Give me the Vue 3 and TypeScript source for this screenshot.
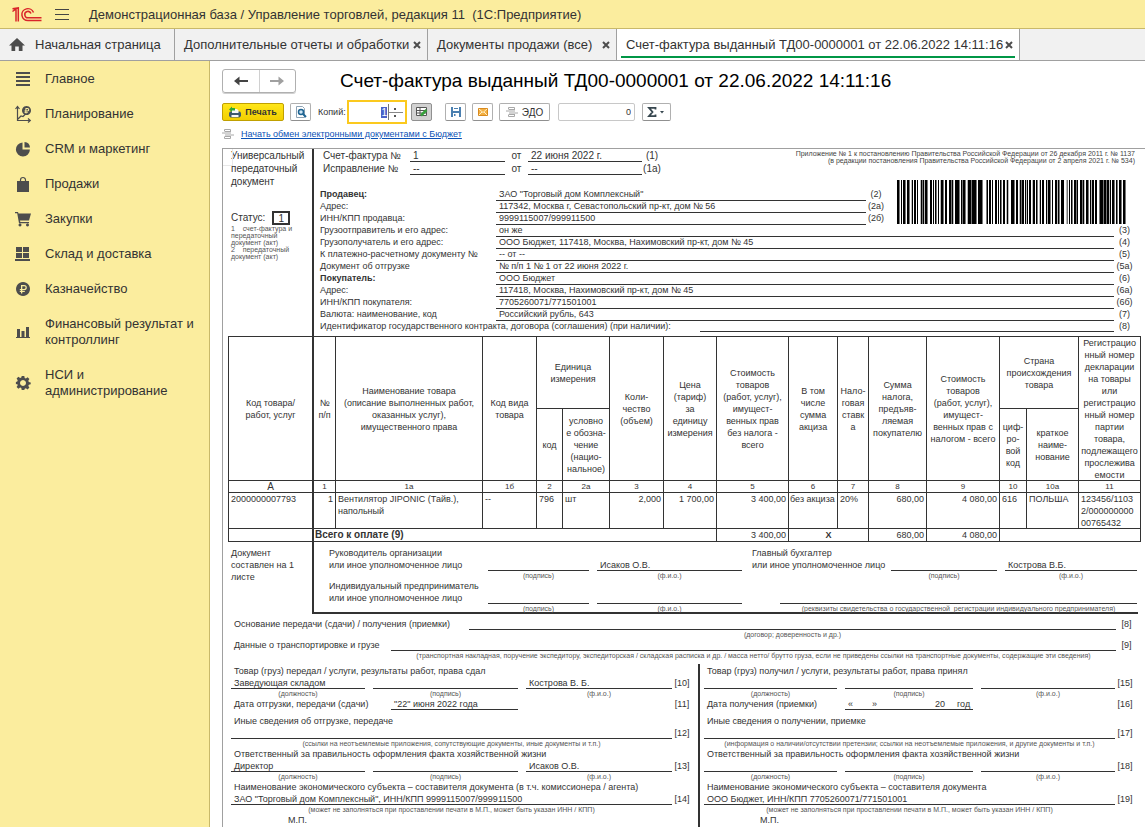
<script setup lang="ts">
import { onMounted, ref } from 'vue'

interface Shape { d: string; line?: boolean }
interface MenuItem { label: string; shapes: Shape[] }
interface Tab { label: string; cls: string; active?: boolean }
interface Party { label: string; value: string; code: string; bold?: boolean }
interface Half {
  cls: string
  title: string
  position: string
  person: string
  codes: string[]
  dateLabel: string
  date: string[]
  otherLabel: string
  otherNote: string
  chief: string
  chiefName: string
  subjectLabel: string
  subject: string
}

const menu: MenuItem[] = [
  { label: 'Главное', shapes: [{ d: 'M1 1h14v2H1zM1 5h14v2H1zM1 9h14v2H1zM1 13h14v2H1z' }] },
  {
    label: 'Планирование',
    shapes: [
      { d: 'M2.500 1v13.500H15M0.500 3l2-2.500 2 2.500M13 12.500l2.300 2-2.300 2M3 13l3-3 2 .5 3-3', line: true },
      { d: 'M11.500 0a4.500 4.500 0 1 0 .01 0zM10.500 2h2a1.600 1.600 0 0 1 0 3.500h-1.200v.7h1.500v.8h-1.500v1h-1v-1h-.8v-.8h.8v-.7h-.8v-.9h.8zM11.400 3v1.500h1a.7.7 0 0 0 0-1.500z' }
    ]
  },
  { label: 'CRM и маркетинг', shapes: [{ d: 'M7.500 1.500V8.500h7.400A7 7 0 1 1 7.500 1.500zM9.500 1a6 6 0 0 1 5.500 5.500H9.500z' }] },
  { label: 'Продажи', shapes: [{ d: 'M2 5h12v11H2z' }, { d: 'M5.500 7.500V4a2.500 2.500 0 0 1 5 0v3.500', line: true }] },
  {
    label: 'Закупки',
    shapes: [
      { d: 'M0 1h3l.5 1.500H16L14 9.500H5l.3 1.500H14v1.300H4L2.200 2.300H0zM5 12.500a1.500 1.500 0 1 0 .01 0zM12.500 12.500a1.500 1.500 0 1 0 .01 0z' }
    ]
  },
  { label: 'Склад и доставка', shapes: [{ d: 'M1 1h6v5H1zM8 1h6v5H8zM1 7h6v5H1zM8 7h6v5H8zM0 13h15v2H0z' }] },
  {
    label: 'Казначейство',
    shapes: [
      { d: 'M8 1a7 7 0 1 0 .01 0zM6 4h3.200a2.600 2.600 0 0 1 0 5.200H7.300v.7h2.500v1.100H7.300v1.500H6V11H4.800V9.900H6v-.7H4.800V8H6zM7.300 5.200V8h1.900a1.400 1.400 0 0 0 0-2.800z' }
    ]
  },
  { label: 'Финансовый результат и контроллинг', shapes: [{ d: 'M2 5h3v8H2zM6.500 7h3v6h-3zM11 3h3v10h-3zM1 13h14v1H1z' }] },
  {
    label: 'НСИ и администрирование',
    shapes: [
      { d: 'M6.700 1h2.600l.4 1.900 1.200.5 1.700-1.100 1.800 1.800-1.100 1.700.5 1.200 1.900.4v1.900l-1.900.4-.5 1.200 1.100 1.700-1.800 1.800-1.700-1.100-1.200.5L9.300 15H6.700l-.4-1.900-1.200-.5-1.700 1.100-1.800-1.800 1.100-1.700-.5-1.200L.9 9.300V7l1.400-.5.4-1.200-1.100-1.700 1.800-1.800 1.700 1.100 1.200-.5zM8 5a3 3 0 1 0 .01 0z' }
    ]
  }
]

const tabs: Tab[] = [
  { label: 'Дополнительные отчеты и обработки', cls: 'tab-reports' },
  { label: 'Документы продажи (все)', cls: 'tab-sales' },
  { label: 'Счет-фактура выданный ТД00-0000001 от 22.06.2022 14:11:16', cls: 'tab-invoice', active: true }
]

const seller: Party[] = [
  { label: 'Продавец:', value: 'ЗАО "Торговый дом Комплексный"', code: '(2)', bold: true },
  { label: 'Адрес:', value: '117342, Москва г, Севастопольский пр-кт, дом № 56', code: '(2а)' },
  { label: 'ИНН/КПП продавца:', value: '9999115007/999911500', code: '(2б)' }
]

const parties: Party[] = [
  { label: 'Грузоотправитель и его адрес:', value: 'он же', code: '(3)' },
  { label: 'Грузополучатель и его адрес:', value: 'ООО Бюджет, 117418, Москва, Нахимовский пр-кт, дом № 45', code: '(4)' },
  { label: 'К платежно-расчетному документу №', value: '-- от --', code: '(5)' },
  { label: 'Документ об отгрузке', value: '№ п/п 1 № 1 от 22 июня 2022 г.', code: '(5а)' },
  { label: 'Покупатель:', value: 'ООО Бюджет', code: '(6)', bold: true },
  { label: 'Адрес:', value: '117418, Москва, Нахимовский пр-кт, дом № 45', code: '(6а)' },
  { label: 'ИНН/КПП покупателя:', value: '7705260071/771501001', code: '(6б)' },
  { label: 'Валюта: наименование, код', value: 'Российский рубль, 643', code: '(7)' }
]

const columnWidths: number[] = [85, 22, 147, 54, 26, 47, 54, 53, 72, 49, 31, 58, 73, 27, 52, 62]
const columnCodes: string[] = ['А', '1', '1а', '1б', '2', '2а', '3', '4', '5', '6', '7', '8', '9', '10', '10а', '11']

const halves: Half[] = [
  {
    cls: 'half-out',
    title: 'Товар (груз) передал / услуги, результаты работ, права сдал',
    position: 'Заведующая складом',
    person: 'Кострова В. Б.',
    codes: ['[10]', '[11]', '[12]', '[13]', '[14]'],
    dateLabel: 'Дата отгрузки, передачи (сдачи)',
    date: ['"22" июня 2022 года'],
    otherLabel: 'Иные сведения об отгрузке, передаче',
    otherNote: '(ссылки на неотъемлемые приложения, сопутствующие документы, иные документы и т.п.)',
    chief: 'Директор',
    chiefName: 'Исаков О.В.',
    subjectLabel: 'Наименование экономического субъекта – составителя документа (в т.ч. комиссионера / агента)',
    subject: 'ЗАО "Торговый дом Комплексный", ИНН/КПП 9999115007/999911500'
  },
  {
    cls: 'half-in',
    title: 'Товар (груз) получил / услуги, результаты работ, права принял',
    position: '',
    person: '',
    codes: ['[15]', '[16]', '[17]', '[18]', '[19]'],
    dateLabel: 'Дата получения (приемки)',
    date: ['«', '»', '20', 'год'],
    otherLabel: 'Иные сведения о получении, приемке',
    otherNote: '(информация о наличии/отсутствии претензии; ссылки на неотъемлемые приложения, и другие  документы и т.п.)',
    chief: '',
    chiefName: '',
    subjectLabel: 'Наименование экономического субъекта – составителя документа',
    subject: 'ООО Бюджет, ИНН/КПП 7705260071/771501001'
  }
]

/* One character per module: # black, + grey, - light grey, space blank */
const barcode =
  '##+ # ##+ ##+ -# ##+ #  -#+#-##+  ## # #+ # -##+ ##  ##+#-  ####+ #+##+ -#' +
  '##+####+ ####+   +# ## +#  ## # #+ ## -#-  ###+ ## -#+## #-# ##+ -## #+ -# ' +
  '##  #-##+ #  ##-#+ ###  -+ ## #+ ##+#  ##+#- ##+ #-## ##  +###+##+ ##-# ##+ #+ ##+ ##+'

const bars = Array.from(barcode)
  .map((c, x) => ({ x, c }))
  .filter((b) => b.c !== ' ')
  .map((b) => ({ x: b.x, fill: b.c === '#' ? '#000' : b.c === '+' ? '#777' : '#bbb' }))

const copies = ref('1')
const sum = ref('0')
const copiesInput = ref<HTMLInputElement | null>(null)
onMounted(() => copiesInput.value?.select())
</script>

<template>
  <div class="app">
    <header class="titlebar">
      <svg class="logo" viewBox="0 0 30 15" aria-label="1С">
        <path d="M0.500 4.500L4 2V14.500M0.500 1.800L6.300 0.900V14.500" />
        <path d="M21.500 5.500A6 5.900 0 1 0 16 13.500H29.500M19 6.500A3.200 3.200 0 1 0 16.500 10.800H29.500" />
      </svg>
      <button class="burger" type="button" aria-label="Меню"><i></i><i></i><i></i></button>
      <span class="app-name">Демонстрационная база / Управление торговлей, редакция 11&nbsp; (1С:Предприятие)</span>
    </header>

    <nav class="tabs">
      <a class="tab tab-home" href="#">
        <svg viewBox="0 0 16 14"><path d="M8 0L16 7.500H13.500V13H9.800V8.500H6.200V13H2.500V7.500H0z" /></svg>
        Начальная страница
      </a>
      <div v-for="t in tabs" :key="t.label" class="tab" :class="[t.cls, { active: t.active }]">
        <a href="#">{{ t.label }}</a>
        <button type="button" aria-label="Закрыть">
          <svg viewBox="0 0 8 8"><path d="M1 1l6 6M7 1l-6 6" /></svg>
        </button>
      </div>
    </nav>

    <div class="body">
      <nav class="sidebar">
        <a v-for="m in menu" :key="m.label" href="#">
          <svg viewBox="0 0 16 16">
            <path v-for="(s, i) in m.shapes" :key="i" :d="s.d" :class="{ line: s.line }" />
          </svg>
          <span>{{ m.label }}</span>
        </a>
      </nav>

      <main>
        <div class="heading">
          <div class="history">
            <button type="button" aria-label="Назад">
              <svg viewBox="0 0 14 10"><path d="M0 5l5.500-4.500v3.500H14v2H5.500v3.500z" /></svg>
            </button>
            <button type="button" aria-label="Вперед" class="off">
              <svg viewBox="0 0 14 10"><path d="M14 5L8.500.5v3.500H0v2h8.500v3.500z" /></svg>
            </button>
          </div>
          <h1>Счет-фактура выданный ТД00-0000001 от 22.06.2022 14:11:16</h1>
        </div>

        <div class="toolbar">
          <button type="button" class="btn print">
            <svg viewBox="0 0 12 12">
              <path fill="#3c5a6e" d="M1 5.500h10l1 1.500v3l-1.500 1.500h-9L0 10V7z" />
              <path fill="#f4f8fa" d="M3 3h5l1.500 1.500V7H3zM2.500 9h7v2h-7z" />
              <path fill="#2ea836" d="M0 3.500L3 .5V2h3v2.500H3V6z" />
            </svg>
            Печать
          </button>
          <button type="button" class="btn icon preview" aria-label="Предпросмотр">
            <svg viewBox="0 0 12 12">
              <path fill="#fff" stroke="#8ea3b5" d="M1.500.5h6l2 2v9h-8z" />
              <circle cx="6" cy="6" r="2.500" fill="#cfe6f6" stroke="#1f6593" stroke-width="1.500" />
              <path stroke="#1f6593" stroke-width="2" d="M8 8l3 3" />
            </svg>
          </button>
          <label class="copies-label" for="copies">Копий:</label>
          <div class="copies">
            <input id="copies" ref="copiesInput" v-model="copies" type="text" />
            <div class="spin">
              <button type="button" aria-label="Больше"></button>
              <button type="button" aria-label="Меньше"></button>
            </div>
          </div>
          <button type="button" class="btn icon pressed" aria-label="Редактирование">
            <svg viewBox="0 0 12 12">
              <path fill="#fff" stroke="#555" d="M.5 1.500h10v8H.5zM.5 4.500h10M4 1.500v8M.5 7h10" />
              <path stroke="#35a03b" stroke-width="2.500" d="M5 9.500l5.500-5.500" />
            </svg>
          </button>
          <button type="button" class="btn icon save" aria-label="Сохранить">
            <svg viewBox="0 0 12 12">
              <path fill="#4a7fb0" d="M1 1h10v10H1z" />
              <path fill="#fff" d="M3 1h6v4H3zM3 7h6v4H3z" />
              <path fill="#4a7fb0" d="M4 2h4v1H4zM4 8h1.500v2H4z" />
            </svg>
          </button>
          <button type="button" class="btn icon mail" aria-label="Отправить">
            <svg viewBox="0 0 12 12">
              <path fill="#f3b044" stroke="#d98a1e" d="M1.500 2.500h9v7h-9z" />
              <path fill="none" stroke="#fff0c8" d="M2 3l4 3.500L10 3M2 9l3-3M10 9L7 6" />
            </svg>
          </button>
          <button type="button" class="btn edo">
            <svg viewBox="0 0 12 12" class="exchange">
              <path d="M2.500 3.500V1.500h6v2M2.500 8.500v2h6v-2M0 5h9M3 7h9M3 3.500h6M3 8.500h6" />
            </svg>
            ЭДО
          </button>
          <input v-model="sum" class="sum" type="text" aria-label="Сумма" />
          <button type="button" class="btn sigma" aria-label="Итоги">
            <svg viewBox="0 0 20 12">
              <path fill="none" stroke="#37474f" stroke-width="1.800" d="M8.500 3.500V1.900H2L5.500 6 2 10.100h6.500V8.500" />
              <path fill="#37474f" d="M13 5h4l-2 2.500z" />
            </svg>
          </button>
        </div>

        <div class="exchange-row">
          <svg viewBox="0 0 12 12" class="exchange">
            <path d="M2.500 3.500V1.500h6v2M2.500 8.500v2h6v-2M0 5h9M3 7h9M3 3.500h6M3 8.500h6" />
          </svg>
          <a href="#">Начать обмен электронными документами с Бюджет</a>
        </div>

        <article class="sheet">
          <section class="split">
            <div class="side side-head">
              <div class="kind">Универсальный<br />передаточный<br />документ</div>
              <div class="status">Статус: <b>1</b></div>
              <div class="notes">1&nbsp;&nbsp;&nbsp; счет-фактура и<br />передаточный<br />документ (акт)<br />2&nbsp;&nbsp;&nbsp; передаточный<br />документ (акт)</div>
            </div>
            <div class="lead">
              <div class="numbers">
                <div class="number-grid">
                  <span>Счет-фактура №</span><span class="fill">1</span><span class="mid">от</span><span class="fill">22 июня 2022 г.</span><span class="mid">(1)</span>
                  <span>Исправление №</span><span class="fill">--</span><span class="mid">от</span><span class="fill">--</span><span class="mid">(1а)</span>
                </div>
                <p class="decree">
                  Приложение № 1 к постановлению Правительства Российской Федерации от 26 декабря 2011 г. № 1137<br />
                  (в редакции постановления Правительства Российской Федерации от 2 апреля 2021 г. № 534)
                </p>
              </div>
              <div class="seller">
                <div>
                  <div v-for="p in seller" :key="p.label" class="party party-short">
                    <span :class="{ strong: p.bold }">{{ p.label }}</span><span class="fill">{{ p.value }}</span><span class="mid">{{ p.code }}</span>
                  </div>
                </div>
                <svg class="barcode" :viewBox="`0 0 ${barcode.length} 44`" preserveAspectRatio="none" shape-rendering="crispEdges">
                  <rect v-for="b in bars" :key="b.x" :x="b.x" y="0" width="1" height="44" :fill="b.fill" />
                </svg>
              </div>
              <div v-for="p in parties" :key="p.code" class="party">
                <span :class="{ strong: p.bold }">{{ p.label }}</span><span class="fill">{{ p.value }}</span><span class="mid">{{ p.code }}</span>
              </div>
              <div class="party party-contract">
                <span>Идентификатор государственного контракта, договора (соглашения) (при наличии):</span><span class="fill"></span><span class="mid">(8)</span>
              </div>
            </div>
          </section>

          <table class="goods">
            <colgroup>
              <col v-for="(w, i) in columnWidths" :key="i" :style="{ width: w + 'px' }" />
            </colgroup>
            <thead>
              <tr class="head">
                <th rowspan="2" class="thick">Код товара/<br />работ, услуг</th>
                <th rowspan="2">№<br />п/п</th>
                <th rowspan="2">Наименование товара<br />(описание выполненных работ,<br />оказанных услуг),<br />имущественного права</th>
                <th rowspan="2">Код вида<br />товара</th>
                <th colspan="2">Единица<br />измерения</th>
                <th rowspan="2">Коли-<br />чество<br />(объем)</th>
                <th rowspan="2">Цена<br />(тариф)<br />за<br />единицу<br />измерения</th>
                <th rowspan="2">Стоимость<br />товаров<br />(работ, услуг),<br />имущест-<br />венных прав<br />без налога -<br />всего</th>
                <th rowspan="2">В том<br />числе<br />сумма<br />акциза</th>
                <th rowspan="2">Нало-<br />говая<br />ставк<br />а</th>
                <th rowspan="2">Сумма<br />налога,<br />предъяв-<br />ляемая<br />покупателю</th>
                <th rowspan="2">Стоимость<br />товаров<br />(работ, услуг),<br />имущест-<br />венных прав с<br />налогом - всего</th>
                <th colspan="2">Страна<br />происхождения<br />товара</th>
                <th rowspan="2"><div class="snug">Регистрацио<br />нный номер<br />декларации<br />на товары<br />или<br />регистрацио<br />нный номер<br />партии<br />товара,<br />подлежащего<br />прослежива<br />емости</div></th>
              </tr>
              <tr class="head">
                <th>код</th>
                <th>условно<br />е обозна-<br />чение<br />(нацио-<br />нальное)</th>
                <th>циф-<br />ро-<br />вой<br />код</th>
                <th>краткое<br />наиме-<br />нование</th>
              </tr>
              <tr class="codes">
                <th v-for="(c, i) in columnCodes" :key="c" :class="{ thick: i === 0 }">{{ c }}</th>
              </tr>
            </thead>
            <tbody>
              <tr class="item">
                <td class="thick">2000000007793</td>
                <td class="num">1</td>
                <td>Вентилятор JIPONIC (Тайв.),<br />напольный</td>
                <td>--</td>
                <td>796</td>
                <td>шт</td>
                <td class="num">2,000</td>
                <td class="num">1 700,00</td>
                <td class="num">3 400,00</td>
                <td class="tight">без акциза</td>
                <td>20%</td>
                <td class="num">680,00</td>
                <td class="num">4 080,00</td>
                <td>616</td>
                <td>ПОЛЬША</td>
                <td><div class="snug">123456/1103<br />2/000000000<br />00765432</div></td>
              </tr>
              <tr class="total">
                <td class="thick"></td>
                <td colspan="7" class="total-label">Всего к оплате (9)</td>
                <td class="num">3 400,00</td>
                <td colspan="2" class="cross">Х</td>
                <td class="num">680,00</td>
                <td class="num">4 080,00</td>
                <td colspan="3"></td>
              </tr>
            </tbody>
          </table>

          <section class="split">
            <div class="side side-pages">Документ<br />составлен на 1<br />листе</div>
            <div class="lead signatures">
              <div class="sign">
                <span class="who">Руководитель организации<br />или иное уполномоченное лицо</span>
                <span class="fill s2"></span><span class="fill s3">Исаков О.В.</span>
                <span class="who s4">Главный бухгалтер<br />или иное уполномоченное лицо</span>
                <span class="fill s5"></span><span class="fill s6">Кострова В.Б.</span>
                <small class="s2">(подпись)</small><small class="s3">(ф.и.о.)</small>
                <small class="s5">(подпись)</small><small class="s6">(ф.и.о.)</small>
              </div>
              <div class="sign sign-ip">
                <span class="who">Индивидуальный предприниматель<br />или иное уполномоченное лицо</span>
                <span class="fill s2"></span><span class="fill s3"></span><span class="fill s4"></span>
                <small class="s2">(подпись)</small><small class="s3">(ф.и.о.)</small>
                <small class="s4">(реквизиты свидетельства о государственной&nbsp; регистрации индивидуального предпринимателя)</small>
              </div>
            </div>
          </section>

          <section class="grounds">
            <div class="ground ground-basis">
              <span>Основание передачи (сдачи) / получения (приемки)</span><span class="fill"></span><span class="mid">[8]</span>
              <small>(договор; доверенность и др.)</small>
            </div>
            <div class="ground ground-cargo">
              <span>Данные о транспортировке и грузе</span><span class="fill"></span><span class="mid">[9]</span>
              <small>(транспортная накладная, поручение экспедитору, экспедиторская / складская расписка и др. / масса нетто/ брутто груза, если не приведены ссылки на транспортные документы, содержащие эти сведения)</small>
            </div>
          </section>

          <section class="halves">
            <div v-for="h in halves" :key="h.cls" class="half" :class="h.cls">
              <p>{{ h.title }}</p>
              <div class="row">
                <span class="fill c1">{{ h.position }}</span><span class="fill c2"></span><span class="fill c3">{{ h.person }}</span><span class="mid">{{ h.codes[0] }}</span>
                <small class="c1">(должность)</small><small class="c2">(подпись)</small><small class="c3">(ф.и.о.)</small>
              </div>
              <div class="date-row">
                <span class="date-label">{{ h.dateLabel }}</span>
                <span class="fill date"><span v-for="d in h.date" :key="d">{{ d }}</span></span>
                <span class="mid">{{ h.codes[1] }}</span>
              </div>
              <p class="other">{{ h.otherLabel }}</p>
              <div class="row">
                <span class="fill wide"></span><span class="mid">{{ h.codes[2] }}</span>
                <small class="wide">{{ h.otherNote }}</small>
              </div>
              <p>Ответственный за правильность оформления факта хозяйственной жизни</p>
              <div class="row">
                <span class="fill c1">{{ h.chief }}</span><span class="fill c2"></span><span class="fill c3">{{ h.chiefName }}</span><span class="mid">{{ h.codes[3] }}</span>
                <small class="c1">(должность)</small><small class="c2">(подпись)</small><small class="c3">(ф.и.о.)</small>
              </div>
              <p>{{ h.subjectLabel }}</p>
              <div class="row">
                <span class="fill wide">{{ h.subject }}</span><span class="mid">{{ h.codes[4] }}</span>
                <small class="wide">(может не заполняться при проставлении печати в М.П., может быть указан ИНН / КПП)</small>
              </div>
              <p class="stamp">М.П.</p>
            </div>
          </section>
        </article>
      </main>
    </div>
  </div>
</template>

<style>
body {
  margin: 0;
}
</style>

<style scoped>
* {
  box-sizing: border-box;
}
.app {
  display: flex;
  flex-direction: column;
  height: 100vh;
  overflow: hidden;
  background: #fff;
  color: #333;
  font-family: "Liberation Sans", Arial, sans-serif;
  font-size: 13px;
}
button,
input {
  font: inherit;
  color: inherit;
  margin: 0;
  padding: 0;
}
button {
  background: none;
  border: 0;
}
a {
  color: inherit;
  text-decoration: none;
}
p {
  margin: 0;
}
svg {
  flex: none;
}

/* Title bar */
.titlebar {
  flex: none;
  display: flex;
  align-items: center;
  height: 29px;
  padding-left: 12px;
  background: #fbed9e;
  border-bottom: 1px solid #c9b96a;
}
.logo {
  width: 30px;
  height: 15px;
  fill: none;
  stroke: #d9252a;
  stroke-width: 1.5;
}
.burger {
  display: flex;
  flex-direction: column;
  gap: 4px;
  width: 14px;
  margin: 0 20px 0 13px;
}
.burger i {
  height: 1px;
  background: #444;
}
.app-name {
  white-space: nowrap;
}

/* Tabs */
.tabs {
  flex: none;
  display: flex;
  height: 32px;
  background: #f1f1f1;
  border-bottom: 1px solid #a0a0a0;
}
.tab {
  display: flex;
  align-items: center;
  justify-content: space-between;
  border-right: 1px solid #a0a0a0;
  padding: 0 6px 0 9px;
  white-space: nowrap;
}
.tab-home {
  width: 175px;
  justify-content: flex-start;
  gap: 10px;
}
.tab-home svg {
  width: 16px;
  height: 14px;
  fill: #4d4d4d;
}
.tab-reports {
  width: 253px;
}
.tab-sales {
  width: 189px;
}
.tab-invoice {
  width: 403px;
}
.tab.active {
  background:
    linear-gradient(#009646, #009646) center bottom 2px / calc(100% - 8px) 2px no-repeat,
    #fff;
}
.tab button {
  display: flex;
}
.tab button svg {
  width: 8px;
  height: 8px;
  stroke: #4d4d4d;
  stroke-width: 2;
}

/* Sidebar */
.body {
  flex: 1;
  display: flex;
  min-height: 0;
}
.sidebar {
  flex: none;
  width: 210px;
  background: #fbed9e;
  border-right: 1px solid #c9b96a;
}
.sidebar a {
  display: flex;
  align-items: center;
  gap: 14px;
  padding: 10px 12px 9px 15px;
  line-height: 16px;
}
.sidebar svg {
  width: 16px;
  height: 16px;
  fill: #4d4d4d;
  fill-rule: evenodd;
  overflow: visible;
}
.sidebar .line {
  fill: none;
  stroke: #4d4d4d;
  stroke-width: 1.2;
}

/* Heading and toolbar */
main {
  flex: 1;
  min-width: 0;
  padding: 8px 0 0 12px;
}
.heading {
  display: flex;
  align-items: center;
  gap: 44px;
  height: 24px;
}
.history {
  display: flex;
  width: 74px;
  height: 24px;
  border: 1px solid #b0b0b0;
  border-radius: 3px;
  box-shadow: 0 1px 0 #d0d0d0;
}
.history button {
  flex: 1;
  display: flex;
  align-items: center;
  justify-content: center;
}
.history svg {
  width: 14px;
  height: 10px;
  fill: #444;
}
.history .off {
  border-left: 1px solid #d0d0d0;
}
.history .off svg {
  fill: #a0a0a0;
}
h1 {
  margin: 0;
  color: #000;
  font-size: 19px;
  font-weight: 400;
  white-space: nowrap;
}
.toolbar {
  display: flex;
  align-items: center;
  height: 24px;
  margin-top: 7px;
  font-size: 9px;
}
.btn {
  display: flex;
  align-items: center;
  justify-content: center;
  gap: 4px;
  height: 18px;
  border: 1px solid #b0b0b0;
  border-bottom-color: #909090;
  border-radius: 2px;
  background: #fff;
}
.btn svg {
  width: 12px;
  height: 12px;
  fill: none;
}
.icon {
  width: 21px;
}
.print {
  width: 62px;
  border-color: #c0a000;
  background: linear-gradient(#ffe619, #f2cf00);
  font-weight: 700;
}
.preview {
  margin: 0 7px 0 6px;
}
.copies-label {
  width: 29px;
}
.copies {
  display: flex;
  width: 60px;
  height: 24px;
  margin-right: 4px;
  border: 2px solid #fbc91e;
  background: #fff;
}
.copies input {
  flex: 1;
  min-width: 0;
  border: 0;
  outline: 0;
  background: none;
  color: #1d3a8f;
  text-align: right;
  font-size: 10px;
}
.copies input::selection {
  background: #4a62c8;
  color: #fff;
}
.spin {
  display: flex;
  flex-direction: column;
  width: 15px;
  margin: 2px 2px 2px 1px;
  border-left: 1px solid #777;
}
.spin button {
  flex: 1;
  background: radial-gradient(circle at 6px 5px, #555 1px, transparent 1px);
}
.spin button + button {
  border-top: 1px solid #888;
  background: radial-gradient(circle at 6px 3px, #555 1px, transparent 1px);
}
.pressed {
  background: #d2d2d2;
  border-color: #909090;
}
.save {
  margin: 0 6px 0 13px;
}
.edo {
  width: 51px;
  margin: 0 8px 0 6px;
}
.btn.edo {
  font-size: 10px;
}
.exchange {
  width: 12px;
  height: 12px;
  fill: none;
  stroke: #a8a8a8;
}
.sum {
  width: 77px;
  height: 18px;
  margin-right: 7px;
  padding-right: 3px;
  border: 1px solid #c8c8c8;
  border-radius: 2px;
  text-align: right;
}
.sigma {
  width: 29px;
}
.sigma svg {
  width: 20px;
}
.exchange-row {
  display: flex;
  gap: 7px;
  height: 12px;
  margin: 4px 0 8px;
  font-size: 9px;
  line-height: 13px;
}
.exchange-row a {
  color: #0b51b5;
  text-decoration: underline;
}

/* Printed sheet */
.sheet {
  padding: 0 4px 0 5px;
  border: 1px solid #a0a0a0;
  border-width: 1px 0 0 1px;
  font-size: 9px;
  line-height: 12px;
  white-space: nowrap;
}
.fill {
  min-width: 0;
  padding-left: 3px;
  border-bottom: 1px solid #333;
  overflow: visible;
}
.mid {
  text-align: center;
}
.strong {
  font-weight: 700;
}
small {
  display: flex;
  justify-content: center;
  min-width: 0;
  color: #555;
  font-size: 7px;
  line-height: 9px;
}
.split {
  display: grid;
  grid-template-columns: 84fr 829fr;
}
.side {
  min-width: 0;
  padding-left: 3px;
}
.lead {
  min-width: 0;
  border-left: 2px solid #333;
}
.side-head {
  position: relative;
}
.side-head::before {
  content: "";
  position: absolute;
  left: -5px;
  top: 0;
  width: 9px;
  height: 16px;
  border: 1px solid #e8e8e8;
  border-width: 0 1px 1px 0;
}
.kind,
.status {
  font-size: 10px;
  line-height: 13px;
}
.status {
  display: flex;
  gap: 7px;
  margin-top: 23px;
  line-height: 14px;
}
.status b {
  width: 18px;
  height: 14px;
  border: 2px solid #333;
  font-weight: 400;
  line-height: 11px;
  text-align: center;
}
.notes {
  color: #555;
  font-size: 7px;
  line-height: 7px;
}
.numbers {
  display: grid;
  grid-template-columns: 348fr 479fr;
  margin-bottom: 13px;
}
.number-grid {
  display: grid;
  grid-template-columns: 96fr 95fr 23fr 114fr 20fr;
  font-size: 10px;
  line-height: 13px;
}
.number-grid span {
  min-width: 0;
  height: 13px;
}
.number-grid span:nth-child(5n + 1) {
  padding-left: 9px;
}
.number-grid .mid {
  display: flex;
  justify-content: center;
}
.decree {
  min-width: 0;
  padding: 1px 6px 0 0;
  color: #444;
  font-size: 7px;
  line-height: 7px;
  text-align: right;
}
.seller {
  display: grid;
  grid-template-columns: 572fr 255fr;
}
.barcode {
  width: calc(100% - 26px);
  height: 44px;
  margin: -8px 15px 0 11px;
}
.party {
  display: grid;
  grid-template-columns: 182fr 618fr 27fr;
  height: 12px;
}
.party > span:first-child {
  min-width: 0;
  padding-left: 6px;
}
.party .mid {
  padding-right: 6px;
}
.party-short {
  grid-template-columns: 182fr 370fr 20fr;
}
.party-short .mid {
  padding: 0;
}
.party-contract {
  grid-template-columns: 386fr 414fr 27fr;
  margin-bottom: 4px;
}

/* Goods table */
.goods {
  width: 100%;
  table-layout: fixed;
  border-collapse: separate;
  border-spacing: 0;
  border: 1px solid #333;
  border-width: 1px 0 0 1px;
}
.goods th,
.goods td {
  padding: 0 2px;
  border: 1px solid #333;
  border-width: 0 1px 1px 0;
  font-weight: 400;
  line-height: 12px;
}
.goods th {
  padding: 0;
  text-align: center;
}
.goods td {
  vertical-align: top;
  text-align: left;
}
.goods .thick {
  border-right-width: 2px;
}
.snug {
  margin-bottom: -1px;
}
.head {
  height: 72px;
}
.goods .codes th {
  height: 12px;
  font-size: 8px;
  line-height: 11px;
}
.goods .codes .thick {
  font-size: 10px;
}
.item {
  height: 36px;
}
.goods .num {
  text-align: right;
}
.goods .tight {
  padding: 0 1px;
}
.total {
  height: 13px;
}
.goods .total-label {
  padding-left: 1px;
  font-size: 10px;
  font-weight: 700;
}
.goods .cross {
  font-weight: 700;
  text-align: center;
}

/* Signatures */
.side-pages {
  padding-top: 5px;
}
.signatures {
  margin-right: 3px;
  padding-top: 5px;
  border-bottom: 2px solid #333;
}
.sign {
  display: grid;
  grid-template-columns: 174fr 101fr 8fr 145fr 10fr 139fr 106fr 8fr 132fr 1fr;
  grid-template-rows: 24px 9px;
}
.sign > * {
  grid-row: 1;
}
.sign > small {
  grid-row: 2;
}
.sign .who {
  min-width: 0;
}
.sign .who:first-child {
  padding-left: 15px;
}
.sign .fill {
  padding-top: 12px;
}
.s2 {
  grid-column: 2;
}
.s3 {
  grid-column: 4;
}
.s4 {
  grid-column: 6;
}
.s5 {
  grid-column: 7;
}
.s6 {
  grid-column: 9;
}
.sign-ip {
  grid-template-columns: 174fr 101fr 8fr 145fr 38fr 357fr 1fr;
  grid-template-rows: 24px 8px;
}

/* Grounds */
.grounds {
  padding: 4px 0 3px;
}
.ground {
  display: grid;
  grid-template-rows: 12px 9px;
}
.ground > span:first-child {
  min-width: 0;
  padding-left: 6px;
}
.ground > small {
  grid-column: 2;
}
.ground > .mid {
  padding-right: 4px;
}
.ground-basis {
  grid-template-columns: 241fr 647fr 25fr;
}
.ground-cargo {
  grid-template-columns: 163fr 725fr 25fr;
  grid-template-rows: 12px 10px;
}

/* Transfer and receipt */
.halves {
  display: grid;
  grid-template-columns: 470fr 443fr;
}
.half {
  min-width: 0;
  padding: 1px 0 1px 3px;
}
.half-in {
  padding-left: 4px;
  border-left: 2px solid #333;
}
.half p {
  padding-left: 3px;
}
.row,
.date-row {
  display: grid;
  grid-template-rows: 12px 9px;
}
.half-out .row {
  grid-template-columns: 134fr 8fr 145fr 8fr 146fr 26fr;
}
.half-in .row {
  grid-template-columns: 133fr 8fr 128fr 8fr 134fr 26fr;
}
.row > * {
  grid-row: 1;
}
.row > small {
  grid-row: 2;
}
.c1 {
  grid-column: 1;
}
.c2 {
  grid-column: 3;
}
.c3 {
  grid-column: 5;
}
.wide {
  grid-column: 1 / 6;
}
.half .mid {
  grid-column-end: -1;
  padding-right: 6px;
}
.half .date-row {
  grid-template-rows: 12px;
}
.half-out .date-row {
  grid-template-columns: 160fr 127fr 154fr 26fr;
}
.half-in .date-row {
  grid-template-columns: 141fr 128fr 142fr 26fr;
}
.date-label {
  min-width: 0;
  padding-left: 3px;
}
.half-in .date {
  display: grid;
  grid-template-columns: 24fr 63fr 22fr 16fr;
}
.half-in .date span {
  min-width: 0;
}
.half .other {
  margin-top: 5px;
}
.half .stamp {
  padding-left: 57px;
}
.half-in .stamp {
  padding-left: 56px;
}
</style>
